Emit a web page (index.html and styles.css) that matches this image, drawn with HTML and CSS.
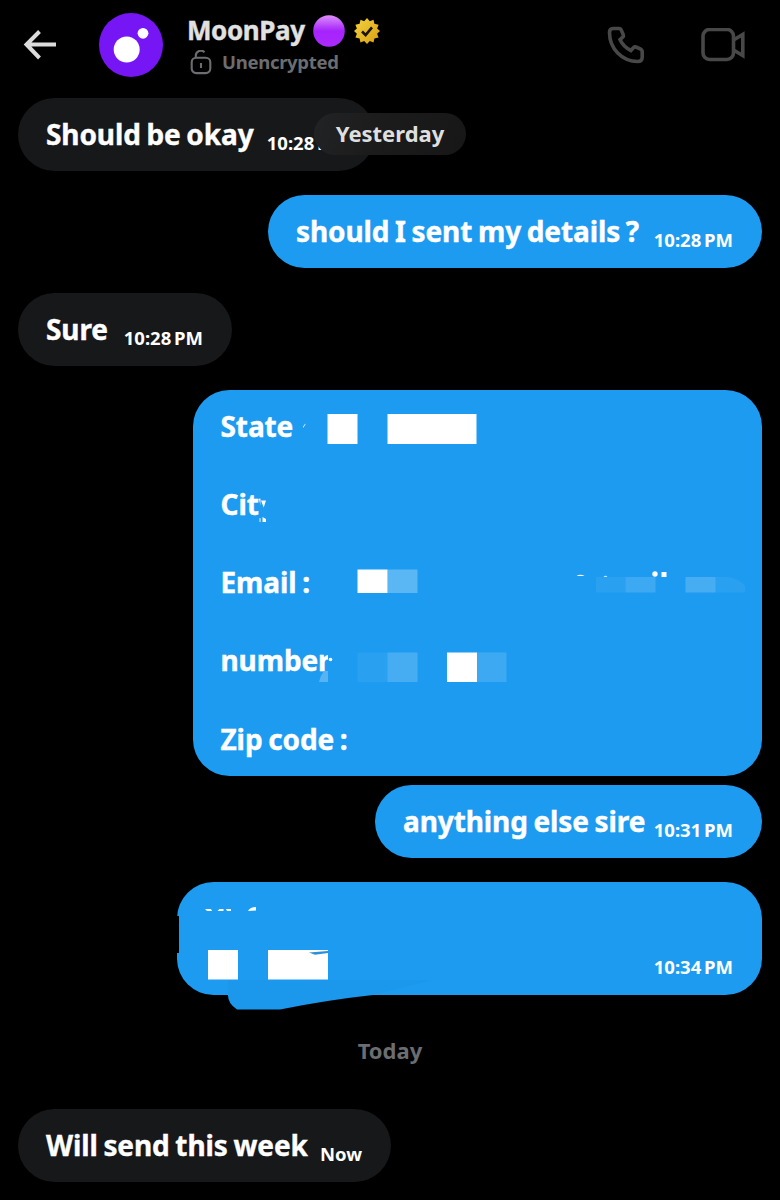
FILE: index.html
```html
<!DOCTYPE html>
<html lang="en">
<head>
    <meta charset="UTF-8">
    <meta name="viewport" content="width=device-width, initial-scale=1.0">
    <title>MoonPay</title>
    <link rel="stylesheet" href="styles.css">
</head>
<body>
    <header class="header">
        <svg class="back" viewBox="0 0 34 30" fill="none" stroke="#dcdcdc" stroke-width="4">
            <path d="M16.500 1.500L3.500 14.500l13 13.500M3 14.500h30"/>
        </svg>
        <svg class="avatar" viewBox="0 0 64 64">
            <circle cx="32" cy="32" r="32" fill="#7716f5"/>
            <circle cx="27.700" cy="36.500" r="13" fill="#fff"/>
            <circle cx="44" cy="20.300" r="5.400" fill="#fff"/>
        </svg>
        <div class="contact">
            <div class="name">
                <span class="name-text">MoonPay</span>
                <svg class="orb" viewBox="0 0 32 32">
                    <defs>
                        <linearGradient id="orb" x1="0" y1="0" x2="0" y2="1">
                            <stop offset="0" stop-color="#dd91fa"/>
                            <stop offset=".35" stop-color="#b642fb"/>
                            <stop offset=".5" stop-color="#a624fb"/>
                            <stop offset="1" stop-color="#ab2aff"/>
                        </linearGradient>
                    </defs>
                    <circle cx="16" cy="16" r="15.800" fill="url(#orb)"/>
                </svg>
                <svg class="badge" viewBox="0 0 26 26">
                    <defs>
                        <linearGradient id="gold" x1="0" y1="0" x2="1" y2="1">
                            <stop offset="0" stop-color="#f5d33e"/>
                            <stop offset="1" stop-color="#d99e12"/>
                        </linearGradient>
                    </defs>
                    <path fill="url(#gold)" d="M13 0l2.800 3.200L19.500 1.700l.9 4.100 4.200.9-1.500 3.700L26 13l-2.900 2.800 1.500 3.700-4.200.9-.9 4.100-3.700-1.500L13 26l-2.800-3-3.700 1.500-.9-4.100-4.200-.9 1.500-3.700L0 13l2.900-2.600-1.500-3.700 4.200-.9.900-4.100 3.700 1.500z"/>
                    <path d="M8 13.500l3.600 3.500L18 9.300" fill="none" stroke="#1a1400" stroke-width="2.600"/>
                </svg>
            </div>
            <div class="status">
                <svg class="lock" viewBox="0 0 22 25" fill="none" stroke="#6b6d70" stroke-width="2.100">
                    <rect x="1.700" y="7.700" width="18.600" height="15.400" rx="4.500"/>
                    <path d="M5.800 7.500V5.700a5 5 0 0 1 8.700-3.400M11 13v5"/>
                </svg>
                <span class="status-text">Unencrypted</span>
            </div>
        </div>
        <svg class="phone" viewBox="0 0 38 38" fill="none" stroke="#484848" stroke-width="3.600">
            <path d="M6 2.500h6q1.500 0 2.200 1.400l2.100 5q.5 1.300-.6 2.300L13 13.600c2.200 4.900 6 8.600 10.900 10.900l2.700-2.900q1-1.100 2.300-.6l4.800 2.100q1.500.9 1.500 2.400V31q0 4.500-4.500 4.500C15 35.500 2.500 22.500 2.500 6.500q0-4 3.500-4z"/>
        </svg>
        <svg class="video" viewBox="0 0 44 34" fill="none" stroke="#484848" stroke-width="3.600">
            <rect x="2" y="1.500" width="30.500" height="30" rx="6.500"/>
            <path d="M32.500 12l9.300-5.500v21L32.500 22"/>
        </svg>
    </header>

    <main class="chat">
        <div class="day-pill">Yesterday</div>
        <div class="bubble in first">
            <span class="text">Should be okay</span>
            <span class="time">10:28 PM</span>
        </div>
        <div class="bubble out question">
            <span class="text">should I sent my details ?</span>
            <span class="time">10:28 PM</span>
        </div>
        <div class="bubble in sure">
            <span class="text">Sure</span>
            <span class="time">10:28 PM</span>
        </div>
        <div class="bubble out details">
            <span class="text">State</span>
            <span class="text">City</span>
            <span class="text">Email :</span>
            <span class="text">number</span>
            <span class="text">Zip code :</span>
            <svg class="redact" viewBox="0 0 569.500 386.500">
                <!-- brush strokes over the ends of the labels -->
                <path fill="#1d9bf0" d="M67.500 100H103v35H67.500zM135 255h10v30h-10zM156 335h10v30h-10z"/>
                <path fill="#fff" d="M73 110.500h-5l2.700 7zM69.500 127l3.500 2v3h-3.500zM110 37q1-3 3-3.500l-3 4.500z"/>
                <path fill="#56b4f5" d="M131 281h4v11h-9q1-6 5-11z"/>
                <circle cx="137.500" cy="269.500" r="1.800" fill="#fff"/>
                <g fill="#fff">
                    <path d="M134.500 24h30v30h-30zM194.500 24h89v30h-89zM164.500 179.500h30V203h-30zM254 262.500h30V292h-30z"/>
                    <path opacity=".28" d="M194.500 179.500h30V203h-30z"/>
                    <path opacity=".19" d="M194.500 262.500h30V292h-30zM492.500 187h30v15.500h-30z"/>
                    <path opacity=".14" d="M284 262.500h29.500V292H284zM432.500 187h30v15.500h-30z"/>
                    <path opacity=".06" d="M164.500 262.500h30V292h-30zM403 187h29.500v15.500H403zM522.500 187H535q12 2 17 9v6.500h-29.500z"/>
                    <path d="M383.500 186q4-2.500 8 0zM410.500 186.800q2-2 4 0zM468.500 182h5v5h-5z"/>
                    <circle cx="462" cy="184" r="2.700"/>
                </g>
            </svg>
        </div>
        <div class="bubble out else">
            <span class="text">anything else sire</span>
            <span class="time">10:31 PM</span>
        </div>
        <div class="bubble out hidden">
            <span class="time">10:34 PM</span>
            <svg class="redact" viewBox="0 0 585 128">
                <path fill="#000" d="M0 34h2v37H0z"/>
                <path fill="#1b98ec" d="M51 98h205q-30 7-60 15-46 5-93 14.500H60q-9-6-9-14z"/>
                <path fill="#fff" d="M31 68h30v29.500H31zM91 68h60v29.500H91zM28 27h6l1 2h-5zM40.500 29l2-2h4v2zM49 27h5v2h-4zM71 29q2-4 8-4v3.500z"/>
                <path fill="#2d8fd8" d="M132 70.500l19-1.500v2l-13 1.800z"/>
            </svg>
        </div>
        <div class="day">Today</div>
        <div class="bubble in last">
            <span class="text">Will send this week</span>
            <span class="time">Now</span>
        </div>
    </main>
</body>
</html>
```
FILE: styles.css
```css
body {
    margin: 0;
    height: 1200px;
    overflow: hidden;
    background: #000;
    color: #fff;
    font-family: "Noto Sans", "Open Sans", sans-serif;
    font-weight: 700;
}
svg {
    display: block;
    flex: none;
}
.header {
    display: flex;
    align-items: center;
    height: 90px;
    box-sizing: border-box;
    padding: 0 35px 0 23px;
}
.back {
    width: 34px;
    height: 30px;
}
.avatar {
    width: 64px;
    height: 64px;
    margin: 0 24px 0 42px;
}
.contact {
    flex: 1;
}
.name {
    display: flex;
    align-items: center;
    height: 34px;
    font-size: 26px;
    color: #e1e1e1;
}
.name-text {
    width: 126px;
    padding-bottom: 3px;
    letter-spacing: -0.400px;
    -webkit-text-stroke: 0.4px currentColor;
}
.orb {
    width: 32px;
    height: 32px;
}
.badge {
    width: 26px;
    height: 26px;
    margin-left: 9px;
}
.status {
    display: flex;
    align-items: center;
    height: 28px;
    gap: 10px;
    padding-left: 3px;
    font-size: 18.500px;
    letter-spacing: -0.300px;
    color: #6b6d70;
}
.status-text {
    padding-bottom: 2px;
}
.lock {
    width: 22px;
    height: 25px;
}
.phone {
    width: 38px;
    height: 38px;
    margin-right: 56px;
}
.video {
    width: 44px;
    height: 34px;
}
.chat {
    position: relative;
    display: flex;
    flex-direction: column;
    padding: 8px 18px 0;
}
.bubble {
    position: relative;
    display: flex;
    justify-content: space-between;
    height: 73px;
    box-sizing: border-box;
    padding: 17px 29px 0 28px;
    margin-bottom: 24.300px;
    border-radius: 36.500px;
    white-space: nowrap;
}
.in {
    align-self: flex-start;
    background: #16181a;
}
.out {
    align-self: flex-end;
    background: #1d9bf0;
}
.text {
    font-size: 28px;
    line-height: 39px;
    letter-spacing: -0.100px;
    word-spacing: -1.500px;
    -webkit-text-stroke: 0.4px currentColor;
}
.time {
    font-size: 18.500px;
    line-height: 24px;
    padding-top: 16px;
    word-spacing: -2px;
}
.first {
    width: 357px;
}
.question {
    width: 494px;
}
.sure {
    width: 214px;
}
.details {
    flex-direction: column;
    justify-content: flex-start;
    gap: 39.200px;
    width: 569.500px;
    height: 386.500px;
    margin-bottom: 8.500px;
}
.else {
    width: 387px;
}
.hidden {
    justify-content: flex-end;
    align-items: flex-end;
    width: 585px;
    height: 113px;
    padding-bottom: 16px;
}
.last {
    width: 373px;
}
.redact {
    position: absolute;
    left: 0;
    top: 0;
    width: 100%;
}
.day {
    align-self: center;
    height: 30px;
    margin: 16px 0 44px;
    font-size: 22px;
    line-height: 30px;
    color: #6b6d70;
}
.day-pill {
    position: absolute;
    z-index: 1;
    left: 314px;
    top: 23px;
    width: 152px;
    height: 42px;
    border-radius: 21px;
    background: linear-gradient(110deg, #222325, #1b1b1b 45%, #171717);
    color: #dfdfdf;
    font-size: 22px;
    line-height: 40px;
    text-align: center;
}
```
